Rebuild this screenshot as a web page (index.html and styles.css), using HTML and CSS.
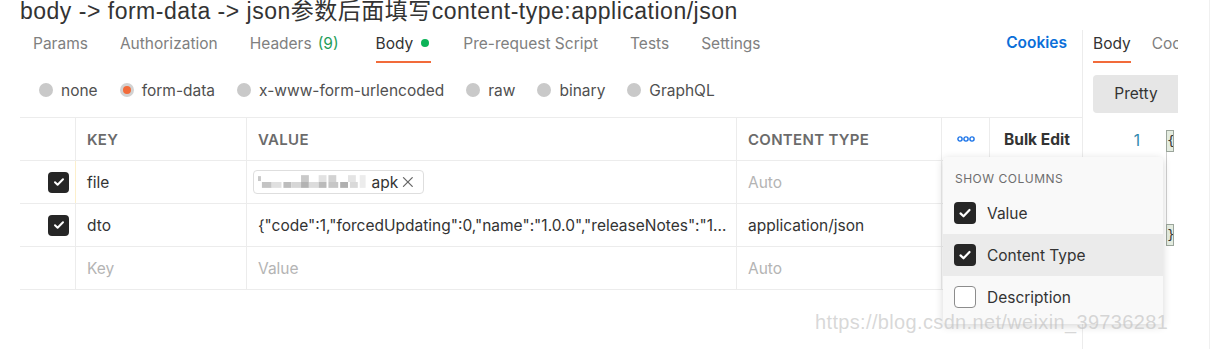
FILE: index.html
```html
<!DOCTYPE html>
<html lang="zh-CN">
<head>
<meta charset="utf-8">
<title>Postman form-data</title>
<link rel="stylesheet" href="styles.css">
</head>
<body>
<div class="page">
  <h1 class="note">body -&gt; form-data -&gt; json参数后面填写content-type:application/json</h1>

  <div class="workspace">
    <div class="request">
      <div class="tabs">
        <span class="tab">Params</span>
        <span class="tab">Authorization</span>
        <span class="tab headers">Headers <span class="count">(9)</span></span>
        <span class="tab active">Body <span class="dot"></span></span>
        <span class="tab">Pre-request Script</span>
        <span class="tab">Tests</span>
        <span class="tab">Settings</span>
        <span class="cookies">Cookies</span>
      </div>

      <div class="body-types">
        <label class="radio"><span class="circle"></span>none</label>
        <label class="radio"><span class="circle selected"></span>form-data</label>
        <label class="radio"><span class="circle"></span>x-www-form-urlencoded</label>
        <label class="radio"><span class="circle"></span>raw</label>
        <label class="radio"><span class="circle"></span>binary</label>
        <label class="radio"><span class="circle"></span>GraphQL</label>
      </div>

      <div class="kv-table">
        <div class="kv-row head">
          <div class="cell"></div>
          <div class="cell">KEY</div>
          <div class="cell">VALUE</div>
          <div class="cell">CONTENT TYPE</div>
          <div class="cell center">
            <svg width="18" height="6" viewBox="0 0 18 6"><circle cx="3" cy="3" r="2.1" fill="none" stroke="#1a73e8" stroke-width="1.4"/><circle cx="9" cy="3" r="2.1" fill="none" stroke="#1a73e8" stroke-width="1.4"/><circle cx="15" cy="3" r="2.1" fill="none" stroke="#1a73e8" stroke-width="1.4"/></svg>
          </div>
          <div class="cell bulk">Bulk Edit</div>
        </div>

        <div class="kv-row">
          <div class="cell check-cell"><span class="check"><svg width="14" height="14" viewBox="0 0 14 14"><path d="M3 7.3l2.6 2.5L11 4.3" fill="none" stroke="#fff" stroke-width="2" stroke-linecap="round" stroke-linejoin="round"/></svg></span></div>
          <div class="cell marked">file</div>
          <div class="cell">
            <span class="file-chip">
              <svg class="pixels" width="112" height="16" viewBox="0 0 112 16">
                <rect x="0" y="2" width="3" height="5" fill="#c8c8c8"/>
                <rect x="4" y="8" width="10" height="6" fill="#c4c4c4"/>
                <rect x="14" y="8" width="10" height="6" fill="#e0e0e0"/>
                <rect x="26" y="8" width="8" height="6" fill="#bdbdbd"/>
                <rect x="34" y="8" width="10" height="6" fill="#d6d6d6"/>
                <rect x="44" y="1" width="8" height="7" fill="#c9c9c9"/>
                <rect x="44" y="8" width="8" height="6" fill="#b3b3b3"/>
                <rect x="52" y="8" width="10" height="6" fill="#dcdcdc"/>
                <rect x="62" y="1" width="8" height="7" fill="#e2e2e2"/>
                <rect x="62" y="8" width="8" height="6" fill="#bbbbbb"/>
                <rect x="72" y="1" width="8" height="7" fill="#d2d2d2"/>
                <rect x="72" y="8" width="10" height="6" fill="#c6c6c6"/>
                <rect x="84" y="8" width="8" height="6" fill="#b0b0b0"/>
                <rect x="92" y="1" width="8" height="7" fill="#e4e4e4"/>
                <rect x="94" y="8" width="8" height="6" fill="#d9d9d9"/>
                <rect x="104" y="1" width="6" height="13" fill="#ececec"/>
              </svg>
              <span>apk</span>
              <svg class="remove" width="12" height="12" viewBox="0 0 12 12"><path d="M1.5 1.5l9 9M10.5 1.5l-9 9" stroke="#666" stroke-width="1.3" stroke-linecap="round"/></svg>
            </span>
          </div>
          <div class="cell muted">Auto</div>
          <div class="cell"></div>
          <div class="cell"></div>
        </div>

        <div class="kv-row">
          <div class="cell check-cell"><span class="check"><svg width="14" height="14" viewBox="0 0 14 14"><path d="M3 7.3l2.6 2.5L11 4.3" fill="none" stroke="#fff" stroke-width="2" stroke-linecap="round" stroke-linejoin="round"/></svg></span></div>
          <div class="cell">dto</div>
          <div class="cell"><span class="clip">{"code":1,"forcedUpdating":0,"name":"1.0.0","releaseNotes":"11111111111111"}</span></div>
          <div class="cell">application/json</div>
          <div class="cell"></div>
          <div class="cell"></div>
        </div>

        <div class="kv-row">
          <div class="cell"></div>
          <div class="cell muted">Key</div>
          <div class="cell muted">Value</div>
          <div class="cell muted">Auto</div>
          <div class="cell"></div>
          <div class="cell"></div>
        </div>
      </div>
    </div>

    <aside class="response">
      <div class="resp-tabs">
        <span class="tab active">Body</span>
        <span class="tab">Cookies</span>
      </div>
      <div class="pretty">Pretty</div>
      <div class="code">
        <span class="ln">1</span>
        <div class="braces">
          <span class="brace">{</span>
          <span class="guide"></span>
          <span class="brace">}</span>
        </div>
      </div>
    </aside>
  </div>

  <div class="columns-menu">
    <div class="menu-title">SHOW COLUMNS</div>
    <div class="menu-item">
      <span class="check big"><svg width="16" height="16" viewBox="0 0 16 16"><path d="M3.5 8.4l3 2.9L12.5 5" fill="none" stroke="#fff" stroke-width="2.2" stroke-linecap="round" stroke-linejoin="round"/></svg></span>
      Value
    </div>
    <div class="menu-item hover">
      <span class="check big"><svg width="16" height="16" viewBox="0 0 16 16"><path d="M3.5 8.4l3 2.9L12.5 5" fill="none" stroke="#fff" stroke-width="2.2" stroke-linecap="round" stroke-linejoin="round"/></svg></span>
      Content Type
    </div>
    <div class="menu-item">
      <span class="check big empty"></span>
      Description
    </div>
  </div>

  <div class="watermark">https://blog.csdn.net/weixin_39736281</div>
</div>
</body>
</html>
```

FILE: styles.css
```css
body {
  margin: 0;
  background: #fff;
  font-family: Inter, "Noto Sans", sans-serif;
  color: #333;
}
.page {
  position: relative;
  width: 1209px;
  height: 349px;
  border-right: 1px solid #f0f0f0;
  overflow: hidden;
}
.note {
  margin: 0;
  padding-left: 20px;
  font: 400 23px/22px "Liberation Sans", "Noto Sans CJK SC", sans-serif;
  letter-spacing: 0.5px;
  color: #333;
  white-space: nowrap;
}
.workspace {
  display: flex;
  margin-top: 8px;
  height: 319px;
}
.request {
  width: 1062px;
  margin-left: 20px;
}

/* tabs */
.tabs {
  display: flex;
  gap: 32px;
  padding-left: 13px;
}
.tab {
  display: flex;
  align-items: center;
  gap: 6px;
  height: 26px;
  padding-bottom: 5px;
  border-bottom: 2px solid transparent;
  font-size: 15.5px;
  color: #808080;
  white-space: nowrap;
}
.tab.headers {
  margin-right: 5px;
}
.tab.active {
  color: #333;
  gap: 8px;
  padding-right: 2px;
  border-bottom-color: #f26b3a;
}
.resp-tabs .tab.active {
  padding-right: 0;
}
.count {
  color: #1f9e5a;
}
.dot {
  width: 8px;
  height: 8px;
  border-radius: 50%;
  background: #0cb458;
}
.cookies {
  margin-left: auto;
  margin-right: 15px;
  height: 26px;
  line-height: 26px;
  font-size: 15.5px;
  font-weight: 600;
  color: #0b6fd9;
}

/* body type radios */
.body-types {
  display: flex;
  align-items: center;
  gap: 22px;
  height: 54px;
  padding-left: 19px;
}
.radio {
  display: flex;
  align-items: center;
  gap: 8px;
  font-size: 15.5px;
  color: #505050;
}
.circle {
  width: 14px;
  height: 14px;
  border-radius: 50%;
  background: #c9c9c9;
  box-sizing: border-box;
}
.circle.selected {
  background: #f26b3a;
  border: 3px solid #d2d2d2;
}

/* key / value table */
.kv-table {
  border-top: 1px solid #ececec;
}
.kv-row {
  display: grid;
  grid-template-columns: 55px 171px 490px 205px 48px 93px;
  height: 43px;
  box-sizing: border-box;
  border-bottom: 1px solid #ececec;
}
.kv-row.head {
  font-weight: 600;
  color: #6b6b6b;
}
.cell {
  display: flex;
  align-items: center;
  padding-left: 11px;
  border-left: 1px solid #ececec;
  font-size: 15.5px;
  white-space: nowrap;
  overflow: hidden;
  min-width: 0;
}
.kv-row.head .cell {
  font-size: 15px;
  letter-spacing: 0.3px;
}
.cell:first-child {
  border-left: none;
}
.cell.marked {
  border-left-color: #fcefcc;
}
.cell.center {
  justify-content: center;
  padding-left: 0;
}
.kv-row.head .cell.bulk {
  padding-left: 14px;
  font-size: 15.5px;
  letter-spacing: 0;
  font-weight: 700;
  color: #333;
}
.check-cell {
  justify-content: flex-end;
  padding: 0 6px 0 0;
}
.muted {
  color: #b4b4b4;
}
.clip {
  display: block;
  width: 470px;
  overflow: hidden;
  text-overflow: ellipsis;
}
.check {
  display: flex;
  align-items: center;
  justify-content: center;
  width: 21px;
  height: 21px;
  border-radius: 4px;
  background: #262626;
  box-sizing: border-box;
}
.check.big {
  width: 22px;
  height: 22px;
}
.check.empty {
  background: #fff;
  border: 1px solid #8c8c8c;
}
.file-chip {
  display: flex;
  align-items: center;
  gap: 4px;
  height: 24px;
  width: 171px;
  margin-left: -5px;
  padding: 0 9px 0 4px;
  box-sizing: border-box;
  border: 1px solid #dedede;
  border-radius: 4px;
  font-size: 15.5px;
}
.pixels {
  filter: blur(0.6px);
}
.remove {
  margin-left: auto;
}

/* response side */
.response {
  width: 96px;
  border-left: 1px solid #ececec;
  overflow: hidden;
  box-sizing: border-box;
  padding-left: 10px;
}
.resp-tabs {
  display: flex;
  gap: 21px;
}
.pretty {
  width: 86px;
  height: 38px;
  margin-top: 12px;
  line-height: 38px;
  text-align: center;
  background: #e6e6e6;
  border-radius: 4px 0 0 4px;
  font-size: 15.5px;
  color: #333;
}
.code {
  display: flex;
  gap: 26px;
  margin-top: 17px;
}
.ln {
  width: 47px;
  text-align: right;
  line-height: 22px;
  font-size: 15.5px;
  color: #2e88ad;
}
.braces {
  display: flex;
  flex-direction: column;
}
.brace {
  width: 8px;
  height: 22px;
  box-sizing: border-box;
  border: 1px solid #9ba59b;
  background: #e4ece0;
  font: 13px/20px "DejaVu Sans Mono", monospace;
  text-align: center;
  overflow: hidden;
  color: #333;
}
.guide {
  width: 1px;
  height: 72px;
  background: #cfcfcf;
}

/* show columns menu */
.columns-menu {
  position: absolute;
  left: 943px;
  top: 157px;
  width: 220px;
  padding: 8px 0 6px;
  background: #f9f9f9;
  border-radius: 4px;
  box-shadow: 0 2px 8px rgba(0, 0, 0, 0.16);
}
.menu-title {
  height: 27px;
  line-height: 27px;
  padding-left: 12px;
  font-size: 12px;
  letter-spacing: 0.5px;
  color: #6e6e6e;
}
.menu-item {
  display: flex;
  align-items: center;
  gap: 11px;
  height: 42px;
  padding-left: 11px;
  font-size: 15.5px;
  color: #333;
}
.menu-item.hover {
  background: #ebebeb;
}
.watermark {
  position: absolute;
  left: 815px;
  top: 311px;
  font: 20px "Liberation Sans", sans-serif;
  letter-spacing: 0.35px;
  color: rgba(190, 190, 190, 0.6);
  pointer-events: none;
  white-space: nowrap;
}
```
